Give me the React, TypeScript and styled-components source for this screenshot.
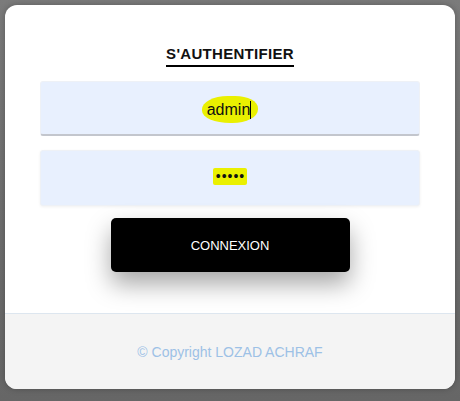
import React from "react";
import styled, { createGlobalStyle } from "styled-components";

const Global = createGlobalStyle`
  html, body { margin: 0; padding: 0; }
  body {
    width: 460px;
    height: 401px;
    background: linear-gradient(180deg, #7b7b7b 0%, #6d6d6d 60%, #666666 100%);
    font-family: "Liberation Sans", Arial, sans-serif;
    overflow: hidden;
  }
`;

const Page = styled.div`
  padding: 5px;
`;

const Card = styled.div`
  width: 450px;
  height: 384px;
  background: #ffffff;
  border-radius: 12px;
  overflow: hidden;
  display: flex;
  flex-direction: column;
  box-shadow: 0 0 6px rgba(0, 0, 0, 0.25);
`;

const Body = styled.div`
  flex: 1;
  display: flex;
  flex-direction: column;
  align-items: center;
  padding: 39px 35px 0;
`;

const Title = styled.h2`
  margin: 0 0 14px;
  font-size: 15px;
  font-weight: bold;
  letter-spacing: 0.3px;
  color: #111;
  line-height: 20px;
  padding-bottom: 1px;
  border-bottom: 2px solid #000;
`;

const Field = styled.div<{ $underline?: boolean }>`
  width: 380px;
  height: ${(p) => (p.$underline ? 55 : 56)}px;
  box-sizing: border-box;
  background: #e8f0fe;
  border-radius: 3px;
  display: flex;
  align-items: center;
  justify-content: center;
  margin-bottom: ${(p) => (p.$underline ? 14 : 12)}px;
  border: 1px solid #eef1f6;
  border-bottom: ${(p) => (p.$underline ? "2px solid #c3c6cd" : "1px solid #eef1f6")};
  box-shadow: ${(p) => (p.$underline ? "none" : "0 1px 3px rgba(0,0,0,0.06)")};
  color: #111;
`;

const Marker = styled.span`
  background: #eaf000;
  border-radius: 45% 40% 45% 50% / 50% 45% 50% 45%;
  padding: 5px 7px 4px 5px;
  font-size: 16px;
  line-height: 18px;
  display: inline-flex;
  align-items: center;
  margin-top: 2px;
`;

const Caret = styled.span`
  display: inline-block;
  width: 1px;
  height: 18px;
  background: #000;
`;

const Dots = styled.span`
  background: #eaf000;
  border-radius: 2px;
  padding: 2px 2px 2px 3px;
  font-size: 14px;
  line-height: 13px;
  letter-spacing: 1px;
  margin-top: -3px;
`;

const Button = styled.button`
  width: 239px;
  height: 54px;
  background: #000;
  color: #fff;
  border: none;
  border-radius: 5px;
  font-family: "Liberation Sans", Arial, sans-serif;
  font-size: 13px;
  box-shadow: 0 12px 24px rgba(0, 0, 0, 0.35);
  cursor: pointer;
`;

const Footer = styled.div`
  height: 76px;
  background: #f4f4f4;
  border-top: 1px solid #dde6ef;
  display: flex;
  align-items: center;
  justify-content: center;
  color: #9dc1e6;
  font-size: 14px;
  box-sizing: border-box;
`;

export default function App() {
  return (
    <Page>
      <Global />
      <Card>
        <Body>
          <Title>S'AUTHENTIFIER</Title>
          <Field $underline>
            <Marker>
              admin
              <Caret />
            </Marker>
          </Field>
          <Field>
            <Dots>•••••</Dots>
          </Field>
          <Button>CONNEXION</Button>
        </Body>
        <Footer>© Copyright LOZAD ACHRAF</Footer>
      </Card>
    </Page>
  );
}
